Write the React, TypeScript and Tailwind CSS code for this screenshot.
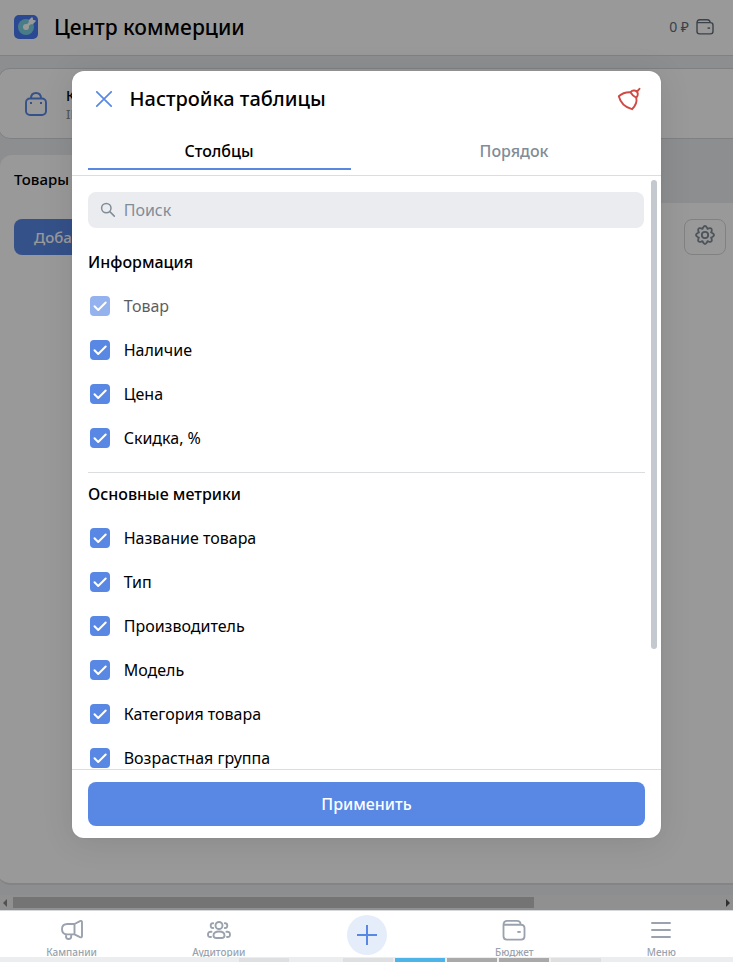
import React from "react";

const info = [
  { label: "Товар", disabled: true },
  { label: "Наличие" },
  { label: "Цена" },
  { label: "Скидка, %" },
];

const metrics = [
  { label: "Название товара" },
  { label: "Тип" },
  { label: "Производитель" },
  { label: "Модель" },
  { label: "Категория товара" },
  { label: "Возрастная группа" },
];

function WalletIcon({ className }: { className: string }) {
  return (
    <svg className={className} viewBox="0 0 24 22" fill="none" stroke="currentColor" strokeWidth="1.9">
      <path d="M1 5v12q0 3.500 3.500 3.500h15q3.500 0 3.500-3.500V8.500Q23 5 19.500 5H1Q1 1 5 1h10q4 0 4 4" strokeLinejoin="round" />
      <path d="M15.500 12.500h3.500" strokeWidth="2" />
    </svg>
  );
}

function CheckRow({ label, disabled }: { label: string; disabled?: boolean }) {
  return (
    <label className={`flex h-11 items-center pl-0.5 ${disabled ? "opacity-64" : ""}`}>
      <span className="flex size-5 items-center justify-center rounded bg-[#5888e4]">
        <svg className="size-5" viewBox="0 0 20 20" fill="none" stroke="white" strokeWidth="2" strokeLinecap="round" strokeLinejoin="round">
          <path d="M4.500 10.300 8.200 14 15.700 6.500" />
        </svg>
      </span>
      <span className="ml-[13.700px] text-base">{label}</span>
    </label>
  );
}

function NavItem({ label, children }: { label: string; children: React.ReactNode }) {
  return (
    <div className="flex flex-1 flex-col items-center pt-[7px] text-[#99a2ad]">
      <div className="flex h-6 shrink-0 items-center justify-center">{children}</div>
      <span className="mt-0.5 shrink-0 text-[10px] leading-4 font-medium whitespace-nowrap">{label}</span>
    </div>
  );
}

function Page() {
  return (
    <div className="flex h-[910px] flex-col bg-[#ebedf0]">
      <header className="flex h-14 shrink-0 items-center border-b border-[#d7d8d9] bg-white pr-[19px] pb-0.5 pl-3.5">
        <svg className="size-6" viewBox="0 0 24 24">
          <rect width="24" height="24" rx="5" fill="#4878f4" />
          <circle cx="12" cy="12" r="8" fill="#79d0e3" />
          <circle cx="12" cy="12" r="3" fill="white" />
          <path d="m12 12 5-5" stroke="white" strokeWidth="2.500" />
          <path d="M15.500 8.500V5.500l2.500-2.500.5 2.500 2.500.5-2.500 2.500z" fill="white" stroke="white" strokeWidth="1.500" strokeLinejoin="round" />
        </svg>
        <h1 className="mt-0.5 ml-4 text-[21px] font-medium">Центр коммерции</h1>
        <div className="ml-auto flex items-center gap-[7px] text-[#626d7a]">
          <span className="text-[14px]">0 ₽</span>
          <WalletIcon className="h-4 w-[18px]" />
        </div>
      </header>

      <section className="mt-3 -mr-4 -ml-0.5 flex h-[71px] shrink-0 items-center rounded-xl border border-[#d4d6d9] bg-white pl-[26px]">
        <svg className="h-6 w-[22px] text-[#5888e4]" viewBox="0 0 22 24" fill="none" stroke="currentColor" strokeWidth="1.900">
          <rect x="1" y="6.500" width="20" height="16.500" rx="4" />
          <path d="M6 6.500C6 3 8 1 11 1s5 2 5 5.500" />
          <path d="M5 11h2M15 11h2" />
        </svg>
        <div className="mt-0.5 ml-[19px] flex flex-col">
          <span className="text-[14px] leading-[18px] font-medium">К</span>
          <span className="text-[13px] leading-[18px] text-[#818c99]">ID</span>
        </div>
      </section>

      <div className="mt-4 flex h-12 shrink-0">
        <div className="flex w-40 items-center rounded-tl-xl bg-white pl-3.5 text-[15px] font-medium">Товары</div>
      </div>
      <section className="-mr-4 -ml-0.5 flex h-[682px] shrink-0 items-start justify-between rounded-b-xl border-b-2 border-[#dcdde0] bg-white pt-4 pr-[23px] pl-4">
        <div className="flex h-9 items-center rounded-lg bg-[#5888e4] px-5 text-[15px] font-medium text-white">Доба</div>
        <div className="flex h-9 w-[42px] items-center justify-center rounded-lg border border-[#d7d8d9] text-[#818c99]">
          <svg className="-mt-1 size-5" viewBox="0 0 24 24" fill="none" stroke="currentColor" strokeWidth="2.200" strokeLinejoin="round">
            <path d="M9.600 3.200Q12-.8 14.400 3.200L15 4.700 16.500 4Q21 2.800 20 7.500l-.7 1.500 1.500.6Q24.800 12 20.800 14.400l-1.500.6.7 1.500Q21 21.200 16.500 20L15 19.300l-.6 1.500Q12 24.800 9.600 20.800L9 19.300l-1.500.7Q2.800 21 4 16.500l.7-1.500-1.500-.6Q-.8 12 3.200 9.600L4.700 9 4 7.500Q2.800 2.800 7.500 4L9 4.700z" />
            <circle cx="12" cy="12" r="3.800" />
          </svg>
        </div>
      </section>

      <div className="mt-auto flex h-[15px] items-center bg-[#f1f1f1]">
        <span className="mr-1.5 ml-[3px] h-0 w-0 border-y-4 border-r-4 border-y-transparent border-r-[#888]" />
        <div className="h-[11px] w-[521px] bg-[#c1c1c1]" />
        <span className="mr-[3px] ml-auto h-0 w-0 border-y-4 border-l-4 border-y-transparent border-l-[#505050]" />
      </div>
    </div>
  );
}

function Modal() {
  return (
    <div className="absolute top-[71px] left-[72px] flex h-[767px] w-[589px] flex-col overflow-hidden rounded-xl bg-white shadow-[0_0_2px_rgba(0,0,0,0.08),0_4px_32px_rgba(0,0,0,0.1)]">
      <div className="flex h-14 shrink-0 items-center pr-5 pl-6">
        <svg className="size-4 text-[#5888e4]" viewBox="0 0 16 16" fill="none" stroke="currentColor" strokeWidth="1.7" strokeLinecap="round">
          <path d="m.8.8 14.400 14.400M15.200.8.8 15.200" />
        </svg>
        <h2 className="ml-[17.500px] text-xl font-medium">Настройка таблицы</h2>
        <svg className="ml-auto size-6 text-[#cf4a45]" viewBox="0 0 24 24" fill="none" stroke="currentColor" strokeWidth="1.9" strokeLinecap="round" strokeLinejoin="round">
          <path d="M1.800 9.300C5 6.200 9.200 5 13.500 5.200c1.500 2.700 3 4.200 5.800 5.400C20.200 15 18.300 19 15 22.200 9 20.600 3.500 16 1.800 9.300Z" />
          <path d="M13.500 5.200c2-2.700 6.600-2.200 7.300 1.300.2 1.700-.3 3-1.500 4.100M20 4.500l2.500-2.700" />
        </svg>
      </div>
      <div className="flex h-[49px] shrink-0 border-b border-[#dcdddf] px-4 pb-[5px]">
        <div className="mr-[31px] flex w-[263px] items-center justify-center border-b-2 border-[#5888e4] pt-1.5 pr-px font-medium">
          Столбцы
        </div>
        <div className="flex w-[263px] items-center justify-center pt-1 pl-px font-medium text-[#818c99]">Порядок</div>
      </div>
      <div className="flex h-[593px] shrink-0 overflow-hidden">
        <div className="w-[573px] shrink-0 pt-4 pl-4">
          <div className="flex h-9 w-[556px] items-center rounded-lg bg-[#ebecf0] pl-3 text-[#818c99]">
            <svg className="size-4" viewBox="0 0 16 16" fill="none" stroke="currentColor" strokeWidth="1.500" strokeLinecap="round">
              <circle cx="6.300" cy="6.100" r="4.700" />
              <path d="m9.800 9.600 4.500 4.500" />
            </svg>
            <span className="ml-[7.700px]">Поиск</span>
          </div>
          <h3 className="mt-3 flex h-11 items-center font-medium">Информация</h3>
          {info.map((item) => <CheckRow key={item.label} {...item} />)}
          <div className="mt-3 border-t border-[#dcdddf]" />
          <h3 className="-mt-px flex h-11 items-center font-medium">Основные метрики</h3>
          {metrics.map((item) => <CheckRow key={item.label} {...item} />)}
        </div>
        <div className="mt-1 ml-1.5 h-[469px] w-1.5 rounded-full bg-[#c4c8cf]" />
      </div>
      <div className="flex h-[69px] shrink-0 border-t border-[#dcdddf] px-4 pt-3">
        <button className="h-11 w-full rounded-lg bg-[#5888e4] text-base font-medium text-white">Применить</button>
      </div>
    </div>
  );
}

function BottomNav() {
  return (
    <nav className="-mx-0.5 flex h-[47px] border-t border-[#d7d8d9] bg-white">
      <NavItem label="Кампании">
        <svg className="h-5 w-[22px]" viewBox="0 0 22 20" fill="none" stroke="currentColor" strokeWidth="1.900" strokeLinejoin="round">
          <path d="M13.500 4H6.500Q1 4 1 9.200t5.500 5.200h7M13.500 4 19 1.200Q21 .3 21 2.500v13.400q0 2-2 1.200l-5.500-2.700zM5 14.400v1.800q0 2.800 2.600 2.800t2.600-2.800v-1.800" />
        </svg>
      </NavItem>
      <NavItem label="Аудитории">
        <svg className="h-[18px] w-6" viewBox="0 0 24 18" fill="none" stroke="currentColor" strokeWidth="1.900" strokeLinecap="round">
          <circle cx="12" cy="4.500" r="3.500" />
          <path d="M6.500 14.500Q6.500 10.500 12 10.500t5.500 4q0 2.500-3 2.500h-5q-3 0-3-2.500Z" />
          <path d="M6.200 2.200Q3.700 2 3.700 4.600T6.200 7M17.800 2.200q2.500-.2 2.500 2.400T17.800 7M4.500 10.800Q1 10.500 1 13.500t3 2.500M19.500 10.800q3.500-.3 3.500 2.700T20 16" />
        </svg>
      </NavItem>
      <div className="flex flex-1 justify-center pt-1 pl-px">
        <div className="flex size-10 items-center justify-center rounded-full bg-[#e5edfb]">
          <svg className="size-5" viewBox="0 0 20 20" stroke="#5888e4" strokeWidth="2"><path d="M0 10h20M10 0v20" /></svg>
        </div>
      </div>
      <NavItem label="Бюджет"><WalletIcon className="h-[21px] w-6" /></NavItem>
      <NavItem label="Меню">
        <svg className="h-[18px] w-5" viewBox="0 0 20 18" stroke="currentColor" strokeWidth="1.900" strokeLinecap="round"><path d="M1 2h18M1 9h18M1 16h18" /></svg>
      </NavItem>
    </nav>
  );
}

export default function App() {
  return (
    <div className="relative h-[962px] w-[733px] overflow-hidden bg-white font-['Noto_Sans',sans-serif] text-black">
      <Page />
      <div className="absolute inset-x-0 top-0 h-[910px] bg-black/40" />
      <Modal />
      <BottomNav />
      <div className="relative flex h-[5px] bg-[#ecedef] pt-px pl-[239px]">
        <span className="mr-[54px] w-[50px] bg-[#dedfe1]" />
        <span className="mr-0.5 w-[50px] bg-[#dedfe1]" />
        <span className="mr-0.5 w-[50px] bg-[#4db3e8]" />
        <span className="mr-0.5 w-[50px] bg-[#a9a9aa]" />
        <span className="mr-0.5 w-[50px] bg-[#a9a9aa]" />
        <span className="w-[50px] bg-[#dedfe1]" />
      </div>
    </div>
  );
}
